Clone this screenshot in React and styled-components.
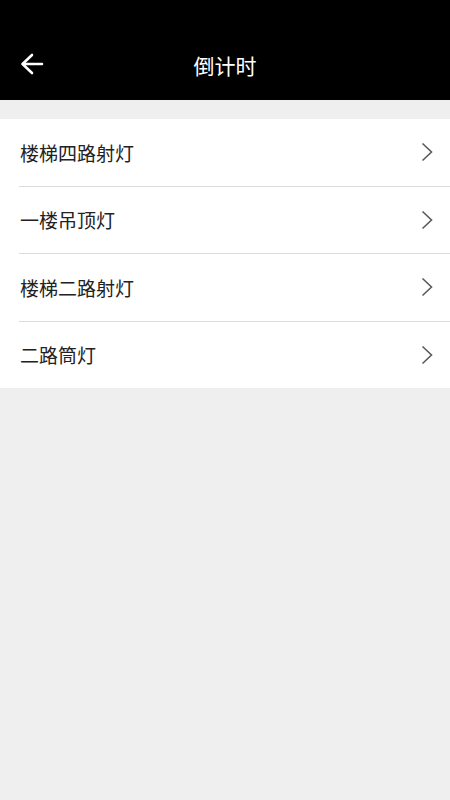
import React from "react";
import styled, { createGlobalStyle } from "styled-components";

const Global = createGlobalStyle`
  html, body { margin: 0; padding: 0; background: #efefef; }
  body { font-family: "Noto Sans CJK SC", "Noto Sans", sans-serif; }
  #root { min-height: 800px; }
`;

const Page = styled.div`
  width: 450px;
  min-height: 800px;
  background: #efefef;
  display: flex;
  flex-direction: column;
`;

const Header = styled.header`
  background: #000;
  padding-top: 31px;
  height: 69px;
  display: flex;
  align-items: center;
  position: relative;
`;

const BackButton = styled.button`
  background: none;
  border: none;
  padding: 0;
  margin-left: 19px;
  margin-top: -4px;
  width: 26px;
  height: 26px;
  display: flex;
  align-items: center;
  justify-content: center;
  cursor: pointer;
`;

const Title = styled.h1`
  position: absolute;
  left: 0;
  right: 0;
  bottom: 20px;
  margin: 0;
  text-align: center;
  color: #fff;
  font-size: 21px;
  font-weight: 400;
  line-height: 30px;
  pointer-events: none;
`;

const List = styled.ul`
  list-style: none;
  margin: 19px 0 0;
  padding: 0 0 0 19px;
  background: #fff;
`;

const Row = styled.li`
  height: 66.5px;
  display: flex;
  align-items: center;
  justify-content: space-between;
  padding-right: 17px;
  border-bottom: ${(p) => (p.last ? "none" : "1px solid #dcdcdc")};
`;

const Label = styled.span`
  font-size: 19px;
  color: #222;
  padding-left: 1px;
`;

const Chevron = () => (
  <svg width="12" height="20" viewBox="0 0 12 20">
    <path d="M1.5 1.5 L10.5 10 L1.5 18.5" fill="none" stroke="#5a5a5a" strokeWidth="1.6" />
  </svg>
);

const items = ["楼梯四路射灯", "一楼吊顶灯", "楼梯二路射灯", "二路筒灯"];

export default function App() {
  return (
    <Page>
      <Global />
      <Header>
        <BackButton aria-label="back">
          <svg width="24" height="22" viewBox="0 0 24 22">
            <path d="M12 2 L2.5 11 L12 20 M2.5 11 H22" fill="none" stroke="#fff" strokeWidth="2.6" strokeLinecap="round" strokeLinejoin="round" />
          </svg>
        </BackButton>
        <Title>倒计时</Title>
      </Header>
      <List>
        {items.map((t, i) => (
          <Row key={t} last={i === items.length - 1}>
            <Label>{t}</Label>
            <Chevron />
          </Row>
        ))}
      </List>
    </Page>
  );
}
